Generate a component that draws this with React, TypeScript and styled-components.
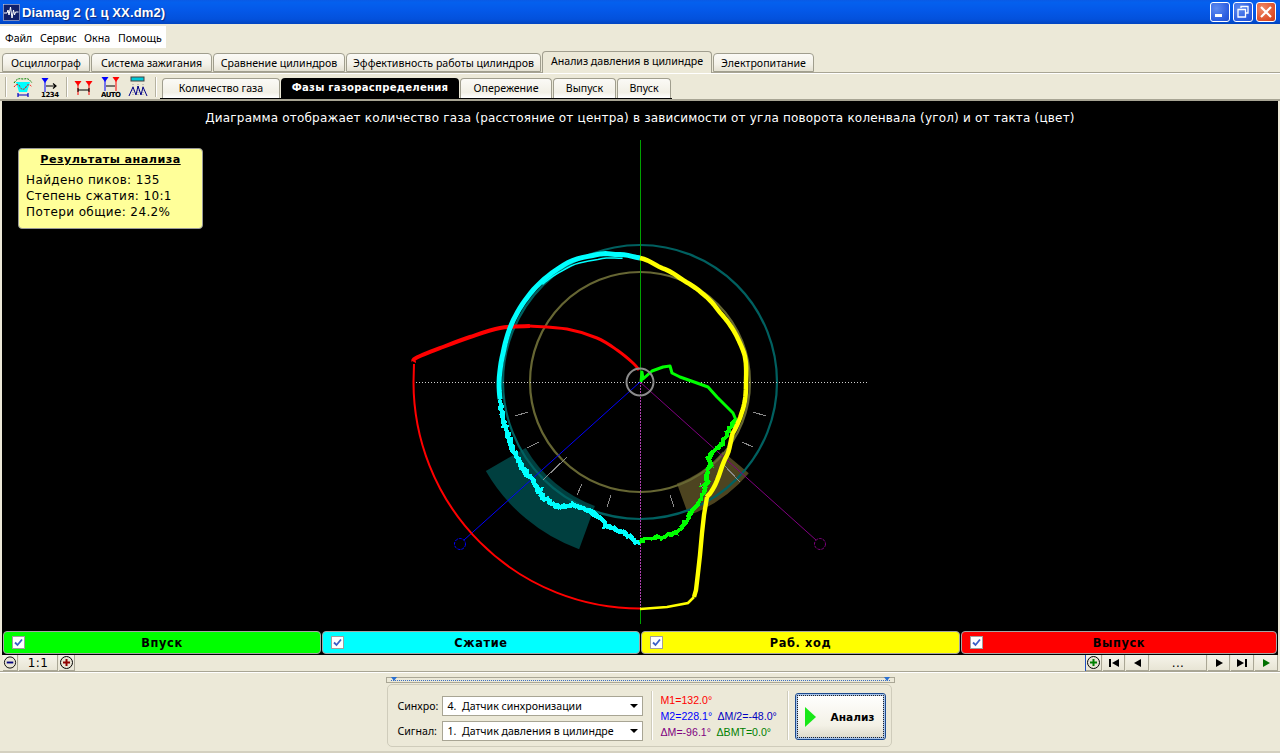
import React from "react";
import styled, { createGlobalStyle } from "styled-components";

const Global = createGlobalStyle`
  html, body { margin: 0; padding: 0; height: 100%; background: #ece9d8; overflow: hidden; }
  #root { width: 1280px; height: 753px; }
`;
const UI = `"Noto Sans", "DejaVu Sans", sans-serif`;
const Win = styled.div`
  width: 1280px; height: 753px; display: flex; flex-direction: column; overflow: hidden;
  background: #ece9d8; font-family: ${UI}; color: #000;
`;
const TitleBar = styled.div`
  height: 24px; flex: none; display: flex; align-items: center; padding: 0 4px 0 3px;
  background: linear-gradient(180deg, #0a5ae6 0%, #0460ee 10%, #0458e8 45%, #0351dc 80%, #0144c0 100%);
`;
const TitleIcon = styled.svg` width: 17px; height: 17px; flex: none; margin-right: 2px; `;
const TitleText = styled.div`
  color: #fff; font: bold 13px "Liberation Sans", sans-serif; letter-spacing: 0.15px;
  text-shadow: 1px 1px 1px #0a2a80; flex: 1;
`;
const WinBtn = styled.div<{ $red?: boolean }>`
  width: 20px; height: 20px; box-sizing: border-box; margin-left: 3px; flex: none;
  border: 1px solid #fff; border-radius: 3px; display: flex; align-items: center; justify-content: center;
  background: ${p => p.$red
    ? "radial-gradient(circle at 30% 30%, #ef8a68, #dd4f2a 70%, #c83c18)"
    : "radial-gradient(circle at 30% 30%, #5f8cf0, #2a5ce0 70%, #2450cc)"};
`;
const MenuRow = styled.div` height: 25px; flex: none; padding-top: 2px; box-sizing: border-box; `;
const MenuBar = styled.div`
  width: 166px; height: 22px; background: #fff; display: flex; align-items: center;
  font-size: 10.6px; padding: 1px 0 0 5px; box-sizing: border-box;
`;
const MenuItem = styled.span<{ $w: number }>` width: ${p => p.$w}px; flex: none; `;
const TabRow = styled.div`
  height: 24px; flex: none; display: flex; align-items: flex-end; padding-left: 2px; gap: 1px;
  box-sizing: border-box; border-bottom: 1px solid #a8a594;
`;
const Tab = styled.div<{ $w: number; $active?: boolean }>`
  width: ${p => p.$w}px; height: ${p => (p.$active ? 22 : 19)}px; flex: none; box-sizing: border-box;
  border: 1px solid #a09e8e; border-bottom: ${p => (p.$active ? "none" : "1px solid #a09e8e")};
  border-radius: 4px 4px 0 0; text-align: center; font-size: 10.6px;
  line-height: 18px; white-space: nowrap;
  margin-bottom: ${p => (p.$active ? -1 : 0)}px; position: relative;
  background: ${p => (p.$active ? "#ece9d8" : "linear-gradient(180deg,#fbfaf6 0%,#f3f1e8 60%,#e4e1d2 100%)")};
`;
const ToolRow = styled.div`
  height: 28px; flex: none; display: flex; align-items: center; box-sizing: border-box;
  padding-left: 5px; border-bottom: 2px solid #a8a594; border-top: 1px solid #fff;
`;
const Sep = styled.div<{ $ml: number; $mr: number }>`
  width: 1px; height: 20px; background: #b5b2a0; border-right: 1px solid #fff; flex: none;
  margin: 0 ${p => p.$mr}px 0 ${p => p.$ml}px;
`;
const ToolIcon = styled.svg` width: 20px; height: 22px; flex: none; margin-right: 7px; `;
const SubTabs = styled.div`
  display: flex; gap: 1px; align-self: flex-end; margin-left: 3px; padding: 0 1px 0 2px;
  height: 21px; border-bottom: 1px solid #000; box-sizing: border-box;
`;
const SubTab = styled.div<{ $w: number; $on?: boolean }>`
  width: ${p => p.$w}px; box-sizing: border-box; text-align: center; font-size: 10.6px;
  border-radius: 4px 4px 0 0; white-space: nowrap;
  ${p => p.$on
    ? `background:#000;color:#fff;font:bold 10.1px/20px "DejaVu Sans",sans-serif;letter-spacing:.25px;`
    : "background:linear-gradient(180deg,#fbfaf6,#f2f0e6 70%,#fff);border:1px solid #a09e8e;border-bottom:none;line-height:19px;"}
`;
const Chart = styled.div`
  height: 529px; flex: none; margin: 0 2px; background: #000; position: relative; overflow: hidden;
  font-family: "DejaVu Sans", sans-serif;
`;
const Plot = styled.svg` display: block; width: 1276px; height: 529px; `;
const Caption = styled.div`
  position: absolute; left: 0; right: 0; top: 10px; text-align: center; color: #fff;
  font-size: 12px; letter-spacing: 0.19px; white-space: nowrap;
`;
const Note = styled.div`
  position: absolute; left: 16px; top: 47px; width: 185px; height: 81px; box-sizing: border-box;
  background: #ffff99; border: 1px solid #999; border-radius: 4px; padding: 3px 7px; font-size: 12px;
  line-height: 16px; letter-spacing: 0.38px;
`;
const NoteTitle = styled.div`
  font-weight: bold; font-size: 11.2px; text-decoration: underline; text-align: center; letter-spacing: .45px; margin-bottom: 4px;
`;
const Legend = styled.div`
  height: 25px; flex: none; background: #000; display: flex; gap: 1px; box-sizing: border-box; margin: 0 2px;
  padding: 1px 0 1px 1px;
`;
const LegendItem = styled.div<{ $c: string; $w: number }>`
  width: ${p => p.$w}px; flex: none; background: ${p => p.$c}; border-radius: 4px; border: 1px solid #a5a5a5;
  box-sizing: border-box; position: relative; text-align: center; font: bold 11.4px/22px "DejaVu Sans", sans-serif;
  letter-spacing: 0.6px;
`;
const Check = styled.div`
  position: absolute; left: 8px; top: 4px; width: 13px; height: 13px; box-sizing: border-box; background: #fff;
  border: 1px solid #a0a0a0; display: flex; align-items: center; justify-content: center;
`;
const Status = styled.div`
  height: 17px; flex: none; display: flex; padding-left: 3px; padding-right: 1px; box-sizing: border-box;
  border-bottom: 1px solid #a8a594;
`;
const SBtn = styled.div<{ $w: number }>`
  width: ${p => p.$w}px; flex: none; height: 16px; box-sizing: border-box; display: flex; align-items: center;
  justify-content: center; font: 12px "DejaVu Sans", sans-serif; letter-spacing: .4px; margin-right: 1px;
  background: linear-gradient(180deg,#f6f4ea,#e8e5d5); border-right: 1px solid #aaa796; border-bottom: 1px solid #aaa796;
`;
const Fill = styled.div` flex: 1; border-right: 1px solid #2050c0; height: 16px; `;
const Bottom = styled.div`
  flex: 1; position: relative; display: flex; flex-direction: column; align-items: center; padding-top: 4px;
  box-sizing: border-box; border-top: 1px solid #fff; border-bottom: 2px solid #d4d0c0;
`;
const Splitter = styled.div`
  width: 509px; height: 6px; box-sizing: border-box; border: 1px solid #aaa796; flex: none; position: relative;
  display: flex; align-items: center; padding: 0 4px; margin-left: 1px;
`;
const Dots = styled.div` flex: 1; border-top: 1px dotted #3a6ec0; `;
const Tri = styled.div<{ $side: "left" | "right" }>`
  position: absolute; top: -1px; ${p => p.$side}: 4px; width: 0; height: 0;
  border: 3px solid transparent; border-top: 4px solid #2a70d0;
`;
const Group = styled.div`
  width: 505px; height: 63px; margin: 1px 2px 0 0; box-sizing: border-box; border: 1px solid #cfccbb; border-radius: 5px;
  display: flex; align-items: stretch; flex: none; padding-left: 10px;
`;
const Combos = styled.div` display: flex; flex-direction: column; gap: 5px; padding-top: 11px; width: 253px; flex: none; `;
const ComboLine = styled.div` display: flex; align-items: center; height: 20px; `;
const ComboLabel = styled.span` width: 44px; flex: none; font-size: 10.6px; `;
const Combo = styled.div`
  width: 201px; height: 20px; background: #fff; border: 1px solid #a8a594; box-sizing: border-box; padding-left: 5px;
  font-size: 10.6px; line-height: 19px; position: relative; white-space: pre;
`;
const Arrow = styled.div`
  position: absolute; right: 4px; top: 7px; width: 0; height: 0; border: 4px solid transparent; border-top: 4px solid #000; border-bottom: 0;
`;
const VSep = styled.div` width: 1px; background: #cfccbb; border-right: 1px solid #fff; margin: 6px 0; flex: none; `;
const Values = styled.div`
  width: 134px; flex: none; padding: 7px 0 0 8px; box-sizing: border-box; font: 10.6px/16px "Liberation Sans", sans-serif;
`;
const VLine = styled.div` display: flex; white-space: nowrap; `;
const V = styled.span<{ $c: string; $w?: number }>` color: ${p => p.$c}; ${p => (p.$w ? `width:${p.$w}px;` : "")} flex: none; `;
const Run = styled.div`
  width: 91px; height: 47px; margin: 8px 0 0 6px; box-sizing: border-box; border: 1px solid #1c4a8e; border-radius: 3px;
  outline: 1px dotted #222; outline-offset: -3px; box-shadow: inset 0 0 0 2px #a9c4ea;
  background: linear-gradient(180deg,#fff,#f3f1e6 70%,#dcd8c8); display: flex; align-items: center;
  font: bold 10.6px "DejaVu Sans", sans-serif; flex: none; padding-left: 9px; gap: 15px;
`;

const C = [640, 382];
const polar = (deg: number, r: number) => {
  const a = (deg * Math.PI) / 180;
  return [C[0] + r * Math.sin(a), C[1] - r * Math.cos(a)];
};
function polarCurve(t: number[][], step = 2): number[][] {
  const out: number[][] = [];
  for (let i = 0; i < t.length - 1; i++) {
    const [a0, r0] = t[i], [a1, r1] = t[i + 1];
    const n = Math.max(1, Math.round(Math.abs(a1 - a0) / step));
    for (let k = 0; k < n; k++) {
      const f = k / n, s = f * f * (3 - 2 * f), m = (f + s) / 2;
      out.push(polar(a0 + (a1 - a0) * f, r0 + (r1 - r0) * m));
    }
  }
  const l = t[t.length - 1];
  out.push(polar(l[0], l[1]));
  return out;
}
const poly = (p: number[][]) => "M" + p.map(q => `${q[0].toFixed(1)} ${q[1].toFixed(1)}`).join("L");
function smooth(p: number[][]): string {
  let d = `M${p[0][0]} ${p[0][1]}`;
  for (let i = 0; i < p.length - 1; i++) {
    const a = p[Math.max(0, i - 1)], b = p[i], c = p[i + 1], e = p[Math.min(p.length - 1, i + 2)];
    d += `C${b[0] + (c[0] - a[0]) / 6} ${b[1] + (c[1] - a[1]) / 6} ${c[0] - (e[0] - b[0]) / 6} ${c[1] - (e[1] - b[1]) / 6} ${c[0]} ${c[1]}`;
  }
  return d;
}
function noisy(p: number[][], seed: number, amp: number, spacing = 2.5): number[][] {
  let s = seed;
  const rnd = () => { s = (s * 1664525 + 1013904223) % 4294967296; return s / 4294967296 - 0.5; };
  const out: number[][] = [];
  for (let i = 0; i < p.length - 1; i++) {
    const dx = p[i + 1][0] - p[i][0], dy = p[i + 1][1] - p[i][1];
    const n = Math.max(1, Math.round(Math.hypot(dx, dy) / spacing));
    for (let k = 0; k < n; k++) {
      out.push([p[i][0] + (dx * k) / n + rnd() * amp, p[i][1] + (dy * k) / n + rnd() * amp]);
    }
  }
  out.push(p[p.length - 1]);
  return out;
}

const yellowPolar = polarCurve([[0,124],[11,116],[25,110],[38,108],[49,106],[65,107],[76,108],[90,106],[100,106.5],[119,106],[132,114.7],[150,133]]);
const yellowLow = [[707,497],[704,515],[702,533],[700,555],[698,573],[696,590],[694,597]];
const yellowEnd = [[694,597],[688,603],[667,607],[640,609]];
const cyanPolar = polarCurve([[0,124],[-9,129],[-17,134],[-31,139.5],[-49,141],[-64,141],[-78,140],[-92,141],[-97,141]]);
const cyanInner = polarCurve([[-8,125],[-17,129],[-31,135],[-45,138]]);
const cyanLow = [[500,400],[502,415],[507,433],[513,450],[520,463],[524,470],[533,480],[537,487],[543,497],[550,503],[556,506],[563,507],[572,505],[580,508],[587,510],[592,512],[598,517],[603,520],[606,526],[613,528],[620,532],[627,535],[634,540],[640,543]];
const redLeft = [[414,362],[416,358],[443,347],[470,337],[500,328],[530,326]];
const redRight = [[530,326],[567,329],[597,338],[617,350],[633,363],[639,370]];
const greenA = [[641,382],[642,372],[643,379],[652,371],[663,367],[670,366],[672,373],[680,377],[697,383],[708,387],[717,397],[733,413],[736,420]];
const greenB = [[736,420],[732,426],[727,433],[722,445],[712,452],[708,458],[710,466],[706,478],[707,485],[700,498],[697,503],[692,512],[687,520],[682,528],[677,533],[668,535],[660,538],[654,537],[650,540],[645,539],[640,542]];

const sector = (r1: number, r2: number, a1: number, a2: number) => {
  const pt = (r: number, a: number) => `${640 + r * Math.sin((a * Math.PI) / 180)} ${382 + r * Math.cos((a * Math.PI) / 180)}`;
  const sw = a2 > a1 ? 0 : 1;
  return `M${pt(r1, a1)}A${r1} ${r1} 0 0 ${sw} ${pt(r1, a2)}L${pt(r2, a2)}A${r2} ${r2} 0 0 ${1 - sw} ${pt(r2, a1)}Z`;
};
const ticks = [[515,416,528,412],[527,448,539,442],[543,480,567,457],[577,495,582,484],[607,507,611,495],[674,507,670,495],[700,483,704,491],[722,463,740,482],[742,442,753,447],[753,412,766,416]];

const Ant = ({ x, y, c }: { x: number; y: number; c: string }) => (
  <g>
    <path d={`M${x - 3.5} ${y}h7l-3.5 5z`} fill={c} />
    <path d={`M${x} ${y + 4}v10`} stroke={c} strokeWidth="1" />
  </g>
);
const Icon = ({ children }: { children: React.ReactNode }) => <ToolIcon viewBox="0 0 20 22">{children}</ToolIcon>;
const IconText = styled.text` font: bold 7px "DejaVu Sans", sans-serif; `;

const Circ = ({ c, d }: { c: string; d: string }) => (
  <svg width="15" height="15" viewBox="0 0 15 15">
    <circle cx="7.5" cy="7.5" r="6" fill="#e8e5d5" stroke="#000" />
    <path d={d} stroke={c} strokeWidth="2" />
  </svg>
);
const Nav = ({ d, c = "#000" }: { d: string; c?: string }) => (
  <svg width="14" height="12" viewBox="0 0 14 12"><path d={d} fill={c} /></svg>
);

const mainTabs: [string, number][] = [["Осциллограф", 88], ["Система зажигания", 121], ["Сравнение цилиндров", 132], ["Эффективность работы цилиндров", 195], ["Анализ давления в цилиндре", 170], ["Электропитание", 101]];
const subTabs: [string, number][] = [["Количество газа", 118], ["Фазы газораспределения", 178], ["Опережение", 92], ["Выпуск", 63], ["Впуск", 54]];
const legend: [string, string, number][] = [["Впуск", "#00ff00", 318], ["Сжатие", "#00ffff", 318], ["Раб. ход", "#ffff00", 319], ["Выпуск", "#ff0000", 316]];

export default function App() {
  return (
    <Win>
      <Global />
      <TitleBar>
        <TitleIcon viewBox="0 0 17 17">
          <rect width="17" height="17" fill="#10206a" />
          <rect x="0.5" y="0.5" width="16" height="16" fill="none" stroke="#c8d4f0" strokeWidth="0.6" />
          <path d="M1 9h3l1-3 1 5 1.5-8 1.5 11 1.5-8 1 5 1-3h3" stroke="#fff" fill="none" strokeWidth="1" />
        </TitleIcon>
        <TitleText>Diamag 2 (1 ц XX.dm2)</TitleText>
        <WinBtn>
          <svg width="12" height="12" viewBox="0 0 12 12"><rect x="1" y="8" width="7" height="3" fill="#fff" /></svg>
        </WinBtn>
        <WinBtn>
          <svg width="14" height="14" viewBox="0 0 14 14"><path d="M5 3V1.5h7V8h-2M2 4.5h7.5V12H2z" fill="none" stroke="#fff" strokeWidth="1.3" /></svg>
        </WinBtn>
        <WinBtn $red>
          <svg width="14" height="14" viewBox="0 0 14 14"><path d="M2 2l10 10M12 2L2 12" stroke="#fff" strokeWidth="2.2" /></svg>
        </WinBtn>
      </TitleBar>
      <MenuRow>
        <MenuBar>
          <MenuItem $w={35}>Файл</MenuItem>
          <MenuItem $w={44}>Сервис</MenuItem>
          <MenuItem $w={34}>Окна</MenuItem>
          <MenuItem $w={44}>Помощь</MenuItem>
        </MenuBar>
      </MenuRow>
      <TabRow>
        {mainTabs.map(([t, w], i) => <Tab key={t} $w={w} $active={i === 4}>{t}</Tab>)}
      </TabRow>
      <ToolRow>
        <Sep $ml={0} $mr={6} />
        <Icon>
          <path d="M3 6h14l-3 10H6z" fill="#00ffff" />
          <path d="M1 7C5 1 7 3 10 3s5-2 9 4" stroke="#008000" fill="none" strokeDasharray="2 1" />
          <path d="M1 11c3-4 5-3 6 0s5 3 6 0 4-3 6 0" stroke="#ff0000" fill="none" strokeDasharray="2 1" />
          <path d="M5 17v4M15 17v4M5 19h10" stroke="#0000c0" strokeWidth="1.2" />
        </Icon>
        <Icon>
          <Ant x={5} y={2} c="#0000ff" />
          <path d="M6 10h10M13 7.5l3 2.5-3 2.5" stroke="#000" fill="none" strokeWidth="1.2" />
          <IconText x="1" y="21" textLength="18">1234</IconText>
        </Icon>
        <Sep $ml={-1} $mr={6} />
        <Icon>
          <Ant x={4} y={5} c="#ff0000" />
          <Ant x={15} y={5} c="#ff0000" />
          <path d="M4 14h11M4 12v4M15 12v4" stroke="#000" />
        </Icon>
        <Icon>
          <Ant x={4} y={1} c="#0000ff" />
          <Ant x={15} y={1} c="#ff0000" />
          <path d="M5 10h9" stroke="#000" />
          <IconText x="0" y="21" textLength="20">AUTO</IconText>
        </Icon>
        <Icon>
          <rect x="3" y="1" width="13" height="4" fill="#00c8d8" stroke="#404040" />
          <path d="M5 8v12M10 8v12M15 8v12" stroke="#999" strokeDasharray="1 1" />
          <path d="M1 20l4-9 3 8 2-9 3 9 2-8 4 9" stroke="#000088" fill="none" />
        </Icon>
        <Sep $ml={0} $mr={0} />
        <SubTabs>
          {subTabs.map(([t, w], i) => <SubTab key={t} $w={w} $on={i === 1}>{t}</SubTab>)}
        </SubTabs>
      </ToolRow>
      <Chart>
        <Plot viewBox="2 101 1276 529">
          <path d={sector(132, 178, 300, 340)} fill="#003f3f" />
          <path d={sector(108, 142, 20, 50)} fill="#4d4420" />
          <g fill="none">
            <circle cx="640" cy="382" r="137" stroke="#006060" strokeWidth="2.2" />
            <circle cx="640" cy="382" r="110" stroke="#666633" strokeWidth="2.2" />
          </g>
          <g fill="none" shapeRendering="crispEdges">
            {ticks.map((t, i) => <line key={i} x1={t[0]} y1={t[1]} x2={t[2]} y2={t[3]} stroke="#8a8a8a" />)}
            <path d="M413 382H867" stroke="#cfcfcf" strokeDasharray="1 2" />
            <path d="M640 140V382" stroke="#00a000" />
            <path d="M640 382V610" stroke="#b040b0" strokeDasharray="2 1" />
            <path d="M640 610V624" stroke="#00a000" />
          </g>
          <g fill="none">
            <path d="M640 382L464 540" stroke="#0000ff" />
            <circle cx="460" cy="544" r="5.5" stroke="#0000ff" strokeDasharray="3 1" />
            <path d="M640 382L816 540" stroke="#800080" />
            <circle cx="820" cy="544" r="5.5" stroke="#800080" strokeDasharray="3 1" />
            <path d="M640 608.5A226.5 226.5 0 0 1 413.5 382L414 364" stroke="#ff0000" strokeWidth="2" />
            <path d={smooth(redLeft)} stroke="#ff0000" strokeWidth="4" />
            <path d={smooth(redRight)} stroke="#ff0000" strokeWidth="3" />
            <path d={poly(cyanPolar)} stroke="#00ffff" strokeWidth="5" />
            <path d={poly(cyanInner)} stroke="#00ffff" strokeWidth="1.5" />
          </g>
          <g fill="none" shapeRendering="crispEdges">
            <path d={poly(noisy(cyanLow, 11, 3.2))} stroke="#00ffff" strokeWidth="4" />
            <path d={poly(noisy(cyanLow, 29, 3.2))} stroke="#00ffff" strokeWidth="3.5" />
            <path d={poly(noisy(greenB, 13, 3.5))} stroke="#00ff00" strokeWidth="3.5" />
            <path d={poly(noisy(greenB, 47, 3.5))} stroke="#00ff00" strokeWidth="3" />
          </g>
          <g fill="none">
            <path d={poly(yellowPolar)} stroke="#ffff00" strokeWidth="4.6" />
            <path d={poly(yellowLow)} stroke="#ffff00" strokeWidth="4.4" />
            <path d={poly(yellowEnd)} stroke="#ffff00" strokeWidth="2.6" />
            <path d={poly(greenA)} stroke="#00ff00" strokeWidth="3" strokeLinejoin="round" />
            <circle cx="640" cy="382" r="13.5" stroke="#8c8c8c" strokeWidth="2" />
          </g>
        </Plot>
        <Caption>Диаграмма отображает количество газа (расстояние от центра) в зависимости от угла поворота коленвала (угол) и от такта (цвет)</Caption>
        <Note>
          <NoteTitle>Результаты анализа</NoteTitle>
          <div>Найдено пиков: 135</div>
          <div>Степень сжатия: 10:1</div>
          <div>Потери общие: 24.2%</div>
        </Note>
      </Chart>
      <Legend>
        {legend.map(([t, c, w]) => (
          <LegendItem key={t} $c={c} $w={w}>
            <Check>
              <svg width="9" height="9" viewBox="0 0 9 9"><path d="M1 4.5l2.5 2.5L8 1.5" stroke="#3a5fc8" strokeWidth="1.8" fill="none" /></svg>
            </Check>
            {t}
          </LegendItem>
        ))}
      </Legend>
      <Status>
        <SBtn $w={15}><Circ c="#000080" d="M4 7.5h7" /></SBtn>
        <SBtn $w={39}>1:1</SBtn>
        <SBtn $w={16}><Circ c="#900000" d="M4 7.5h7M7.5 4v7" /></SBtn>
        <Fill />
        <SBtn $w={16}><Circ c="#008000" d="M4 7.5h7M7.5 4v7" /></SBtn>
        <SBtn $w={22}><Nav d="M2 2h2v8H2zM12 2v8L5 6z" /></SBtn>
        <SBtn $w={23}><Nav d="M11 2v8L4 6z" /></SBtn>
        <SBtn $w={57}>...</SBtn>
        <SBtn $w={22}><Nav d="M4 2v8l7-4z" /></SBtn>
        <SBtn $w={23}><Nav d="M2 2v8l7-4zM10 2h2v8h-2z" /></SBtn>
        <SBtn $w={23}><Nav d="M4 2v8l7-4z" c="#007000" /></SBtn>
      </Status>
      <Bottom>
        <Splitter>
          <Tri $side="left" />
          <Dots />
          <Tri $side="right" />
        </Splitter>
        <Group>
          <Combos>
            <ComboLine><ComboLabel>Синхро:</ComboLabel><Combo>4.  Датчик синхронизации<Arrow /></Combo></ComboLine>
            <ComboLine><ComboLabel>Сигнал:</ComboLabel><Combo>1.  Датчик давления в цилиндре<Arrow /></Combo></ComboLine>
          </Combos>
          <VSep />
          <Values>
            <VLine><V $c="#ff0000">M1=132.0°</V></VLine>
            <VLine><V $c="#0000ff" $w={57}>M2=228.1°</V><V $c="#0000c0">ΔM/2=-48.0°</V></VLine>
            <VLine><V $c="#800080" $w={56}>ΔM=-96.1°</V><V $c="#008000">ΔBMT=0.0°</V></VLine>
          </Values>
          <VSep />
          <Run>
            <svg width="11" height="20" viewBox="0 0 11 20"><path d="M0 0L11 10 0 20z" fill="#18e818" /></svg>
            Анализ
          </Run>
        </Group>
      </Bottom>
    </Win>
  );
}
